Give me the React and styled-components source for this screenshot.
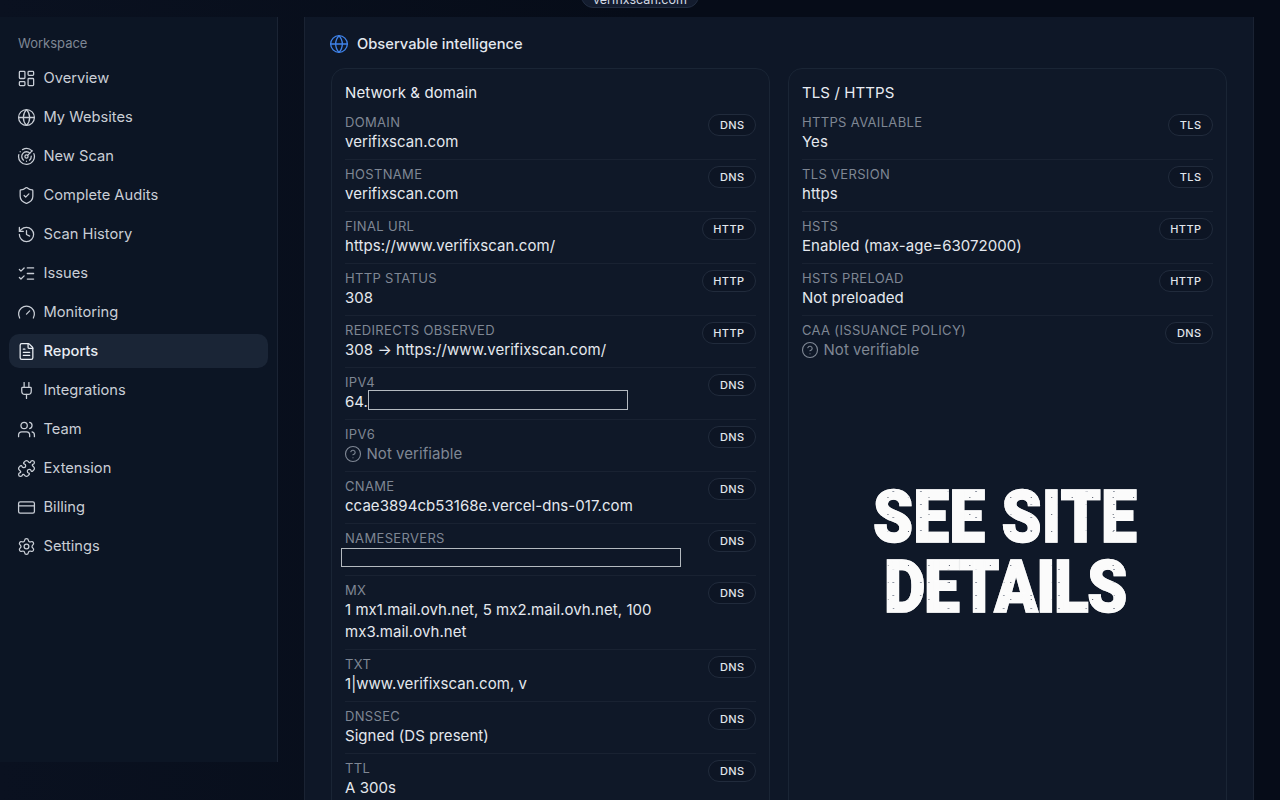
import React from 'react'
import styled, {createGlobalStyle} from 'styled-components'
import {
	LayoutDashboard,
	Globe,
	Radar,
	ShieldCheck,
	History,
	ListChecks,
	Gauge,
	FileText,
	Plug,
	Users,
	Puzzle,
	CreditCard,
	Settings,
	CircleHelp,
} from 'lucide-react'

const GlobalStyle = createGlobalStyle`
	html, body {
		margin: 0;
		height: 100%;
		overflow: hidden;
		background: #060c18;
	}
	* {
		box-sizing: border-box;
	}
`

const Page = styled.div`
	height: 100vh;
	overflow: hidden;
	display: flex;
	flex-direction: column;
	background: linear-gradient(90deg, #0a1120 0%, #060c18 50%, #060c18 100%);
	font-family: Inter, 'Liberation Sans', sans-serif;
`

const TopStrip = styled.div`
	flex: 0 0 17px;
	display: flex;
	justify-content: center;
	align-items: flex-start;
`

const DomainPill = styled.div`
	margin-top: -16px;
	width: 118px;
	height: 24px;
	border: 1px solid #222d40;
	border-radius: 12px;
	background: #131c2e;
	color: #d5dbe4;
	font-size: 12.5px;
	line-height: 30px;
	text-align: center;
`

const Body = styled.div`
	flex: 1;
	display: flex;
	align-items: flex-start;
	gap: 26px;
	padding-right: 26px;
	min-height: 0;
`

const Sidebar = styled.aside`
	flex: 0 0 278px;
	height: 745px;
	padding: 17px 9px 0;
	background: #0c1524;
	border-right: 1px solid #1b2434;
`

const SideLabel = styled.div`
	padding-left: 9px;
	font-size: 13px;
	line-height: 18px;
	color: #7f8794;
	margin-bottom: 9px;
`

const Nav = styled.nav`
	display: flex;
	flex-direction: column;
	gap: 5px;
`

const NavItem = styled.a`
	display: flex;
	align-items: center;
	gap: 8px;
	height: 34px;
	width: 259px;
	padding-left: 7.5px;
	border-radius: 10px;
	font-size: 14.7px;
	color: ${p => (p.$active ? '#e9eef4' : '#c9ced6')};
	background: ${p => (p.$active ? '#1a2536' : 'transparent')};
	font-weight: ${p => (p.$active ? 500 : 400)};
`

const Panel = styled.main`
	flex: 1;
	padding: 0 26px 40px;
	background: #0e1727;
	border: 1px solid #1a2333;
	border-width: 0 1px;
`

const PanelHeading = styled.h2`
	display: flex;
	align-items: center;
	gap: 8px;
	height: 51px;
	margin: 0 0 0 -2px;
	padding-top: 3px;
	font-size: 14.7px;
	font-weight: 500;
	color: #e3e8ef;
`

const Columns = styled.div`
	display: grid;
	grid-template-columns: 439px 439px;
	gap: 18px;
`

const Card = styled.section`
	position: relative;
	padding: 12px 13px 40px;
	background: #0f1828;
	border: 1px solid #1a2535;
	border-radius: 14px;
`

const CardTitle = styled.h3`
	margin: 0 0 3px;
	font-size: 15px;
	line-height: 24px;
	font-weight: 400;
	letter-spacing: 0.1px;
	color: #e9edf3;
`

const Row = styled.div`
	display: flex;
	justify-content: space-between;
	align-items: flex-start;
	gap: 12px;
	padding: 6px 0;
	border-bottom: 1px solid ${p => (p.$last ? 'transparent' : '#192232')};
`

const RowText = styled.div`
	min-width: 0;
`

const RowLabel = styled.div`
	font-size: 13px;
	line-height: 17px;
	letter-spacing: 0.33px;
	color: #7f8794;
`

const RowValue = styled.div`
	display: flex;
	align-items: center;
	min-height: 22px;
	font-size: 15px;
	line-height: 22px;
	letter-spacing: 0.05px;
	color: ${p => (p.$muted ? '#7f8794' : '#e4e8ee')};
`

const MutedIcon = styled.span`
	display: inline-flex;
	margin: 0 5px 0 -1.5px;
`

const Redaction = styled.span`
	flex: none;
	align-self: flex-start;
	width: ${p => p.$width}px;
	height: ${p => p.$height}px;
	margin-top: ${p => p.$top}px;
	margin-left: ${p => p.$shift || 0}px;
	border: 1.5px solid #b4bac0;
	background: #0e1727;
`

const Badge = styled.span`
	flex: none;
	height: 22px;
	padding: 0 10.5px;
	border: 1px solid #212b3c;
	border-radius: 11px;
	background: #0d1524;
	color: #e1e6ec;
	font-size: 11px;
	font-weight: 500;
	line-height: 20px;
	letter-spacing: 0.4px;
`

const Stamp = styled.div`
	position: absolute;
	left: 0;
	right: 5px;
	top: 414px;
	text-align: center;
	font-family: Roboto, 'Liberation Sans', sans-serif;
	font-size: 72px;
	font-weight: 900;
	line-height: 70px;
	color: transparent;
	background-color: #fbfbfb;
	background-image: radial-gradient(circle, #4a5160 0.6px, transparent 0.9px),
		radial-gradient(circle, #7b8290 0.5px, transparent 0.8px);
	background-size: 23px 17px, 31px 13px;
	background-position: 4px 6px, 13px 2px;
	-webkit-background-clip: text;
	background-clip: text;
	-webkit-text-stroke: 1.5px rgba(251, 251, 251, 0.8);
	transform: scaleX(0.89);
`

const StampLine = styled.span`
	letter-spacing: ${p => p.$spacing}px;
`

const NAV = [
	['Overview', LayoutDashboard],
	['My Websites', Globe],
	['New Scan', Radar],
	['Complete Audits', ShieldCheck],
	['Scan History', History],
	['Issues', ListChecks],
	['Monitoring', Gauge],
	['Reports', FileText],
	['Integrations', Plug],
	['Team', Users],
	['Extension', Puzzle],
	['Billing', CreditCard],
	['Settings', Settings],
]

const NETWORK = [
	{label: 'DOMAIN', value: 'verifixscan.com', tag: 'DNS'},
	{label: 'HOSTNAME', value: 'verifixscan.com', tag: 'DNS'},
	{label: 'FINAL URL', value: 'https://www.verifixscan.com/', tag: 'HTTP'},
	{label: 'HTTP STATUS', value: '308', tag: 'HTTP'},
	{label: 'REDIRECTS OBSERVED', value: '308 → https://www.verifixscan.com/', tag: 'HTTP'},
	{
		label: 'IPV4',
		value: (
			<>
				<span>64.</span>
				<Redaction $width={260} $height={20} $top={-1} />
			</>
		),
		tag: 'DNS',
	},
	{label: 'IPV6', muted: true, tag: 'DNS'},
	{label: 'CNAME', value: 'ccae3894cb53168e.vercel-dns-017.com', tag: 'DNS'},
	{label: 'NAMESERVERS', value: <Redaction $width={340} $height={19} $top={1} $shift={-4} />, tag: 'DNS'},
	{label: 'MX', value: '1 mx1.mail.ovh.net, 5 mx2.mail.ovh.net, 100 mx3.mail.ovh.net', tag: 'DNS'},
	{label: 'TXT', value: '1|www.verifixscan.com, v', tag: 'DNS'},
	{label: 'DNSSEC', value: 'Signed (DS present)', tag: 'DNS'},
	{label: 'TTL', value: 'A 300s', tag: 'DNS'},
]

const TLS = [
	{label: 'HTTPS AVAILABLE', value: 'Yes', tag: 'TLS'},
	{label: 'TLS VERSION', value: 'https', tag: 'TLS'},
	{label: 'HSTS', value: 'Enabled (max-age=63072000)', tag: 'HTTP'},
	{label: 'HSTS PRELOAD', value: 'Not preloaded', tag: 'HTTP'},
	{label: 'CAA (ISSUANCE POLICY)', muted: true, tag: 'DNS'},
]

function InfoRow({row, last}) {
	return (
		<Row $last={last}>
			<RowText>
				<RowLabel>{row.label}</RowLabel>
				{row.muted ? (
					<RowValue $muted>
						<MutedIcon>
							<CircleHelp size={18} strokeWidth={1.5} />
						</MutedIcon>
						Not verifiable
					</RowValue>
				) : (
					<RowValue>{row.value}</RowValue>
				)}
			</RowText>
			<Badge>{row.tag}</Badge>
		</Row>
	)
}

export default function App() {
	return (
		<Page>
			<GlobalStyle />
			<TopStrip>
				<DomainPill>verifixscan.com</DomainPill>
			</TopStrip>
			<Body>
				<Sidebar>
					<SideLabel>Workspace</SideLabel>
					<Nav>
						{NAV.map(([name, Icon]) => (
							<NavItem key={name} $active={name === 'Reports'}>
								<Icon size={19} strokeWidth={1.6} />
								{name}
							</NavItem>
						))}
					</Nav>
				</Sidebar>
				<Panel>
					<PanelHeading>
						<Globe size={20} strokeWidth={1.6} color="#3f83ea" />
						Observable intelligence
					</PanelHeading>
					<Columns>
						<Card>
							<CardTitle>Network &amp; domain</CardTitle>
							{NETWORK.map(row => (
								<InfoRow key={row.label} row={row} />
							))}
						</Card>
						<Card>
							<CardTitle>TLS / HTTPS</CardTitle>
							{TLS.map((row, i) => (
								<InfoRow key={row.label} row={row} last={i === TLS.length - 1} />
							))}
							<Stamp>
								<StampLine $spacing={0.2}>SEE SITE</StampLine>
								<br />
								<StampLine $spacing={-1.7}>DETAILS</StampLine>
							</Stamp>
						</Card>
					</Columns>
				</Panel>
			</Body>
		</Page>
	)
}
